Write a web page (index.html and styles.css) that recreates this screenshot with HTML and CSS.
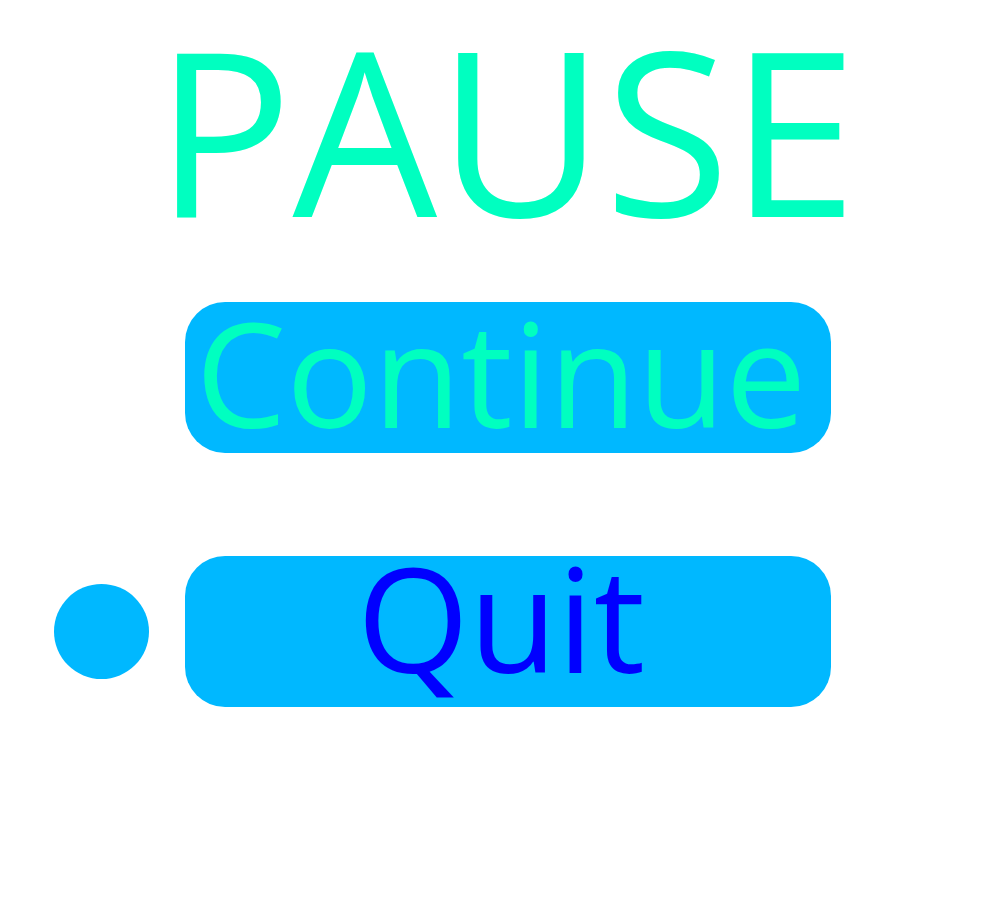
FILE: index.html
```html
<!DOCTYPE html>
<html>
<head>
<meta charset="utf-8">
<link rel="stylesheet" href="styles.css">
</head>
<body>
<main class="menu">
  <h1 class="title">PAUSE</h1>
  <div class="row">
    <span class="marker"></span>
    <button class="btn btn-continue">Continue</button>
  </div>
  <div class="row selected">
    <span class="marker"></span>
    <button class="btn btn-quit">Quit</button>
  </div>
</main>
</body>
</html>
```
FILE: styles.css
```css
html, body {
  margin: 0;
  padding: 0;
  background: #ffffff;
}
.menu {
  display: flex;
  flex-direction: column;
  width: 1000px;
  font-family: "Open Sans", "Noto Sans", sans-serif;
}
.title {
  margin: 0;
  font-size: 229px;
  font-weight: 400;
  line-height: 256px;
  color: #00ffc0;
  text-align: center;
  padding-left: 12px;
  white-space: nowrap;
}
.row {
  display: flex;
  align-items: center;
  gap: 36px;
  padding-left: 54px;
  margin-top: 46px;
}
.row + .row {
  margin-top: 103px;
}
.marker {
  flex: none;
  width: 95px;
  height: 95px;
  border-radius: 50%;
  visibility: hidden;
  background: #00b8ff;
}
.selected .marker {
  visibility: visible;
}
.btn {
  box-sizing: border-box;
  flex: none;
  width: 646px;
  height: 151px;
  border: 0;
  padding: 0 14px 0 0;
  border-radius: 40px;
  background: #00b8ff;
  font-family: "Open Sans", "Noto Sans", sans-serif;
  font-size: 144px;
  text-align: center;
  white-space: nowrap;
  overflow: visible;
}
.btn-continue {
  color: #00ffc0;
  line-height: 140px;
  padding-bottom: 11px;
}
.btn-quit {
  color: #0000ff;
  line-height: 122px;
  padding-bottom: 29px;
}
```
